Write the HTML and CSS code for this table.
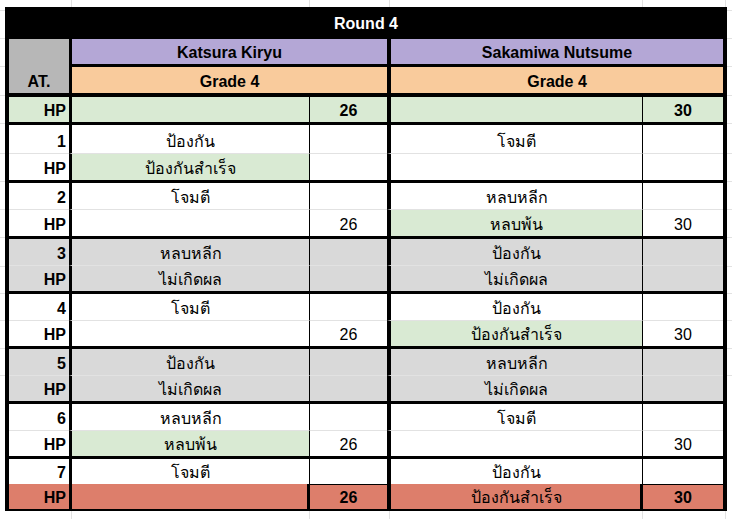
FILE: index.html
```html
<!DOCTYPE html>
<html lang="th">
<head>
<meta charset="utf-8">
<title>Round 4</title>
<link rel="stylesheet" href="styles.css">
</head>
<body>
<div class="sheet">
  <div class="title">Round 4</div>

  <div class="head">
    <div class="at">AT.</div>
    <div class="name p1">Katsura Kiryu</div>
    <div class="name p2">Sakamiwa Nutsume</div>
    <div class="grade p1">Grade 4</div>
    <div class="grade p2">Grade 4</div>
  </div>

  <div class="row start green">
    <div class="c lab">HP</div><div class="c t1"></div><div class="c n1 b">26</div><div class="c t2"></div><div class="c n2 b">30</div>
  </div>

  <div class="group">
    <div class="row tall">
      <div class="c lab">1</div><div class="c t1">ป้องกัน</div><div class="c n1"></div><div class="c t2">โจมตี</div><div class="c n2"></div>
    </div>
    <div class="row sub">
      <div class="c lab">HP</div><div class="c t1 g">ป้องกันสำเร็จ</div><div class="c n1"></div><div class="c t2"></div><div class="c n2"></div>
    </div>
  </div>

  <div class="group g2">
    <div class="row">
      <div class="c lab">2</div><div class="c t1">โจมตี</div><div class="c n1"></div><div class="c t2">หลบหลีก</div><div class="c n2"></div>
    </div>
    <div class="row sub">
      <div class="c lab">HP</div><div class="c t1"></div><div class="c n1">26</div><div class="c t2 g">หลบพ้น</div><div class="c n2">30</div>
    </div>
  </div>

  <div class="group std grey">
    <div class="row">
      <div class="c lab">3</div><div class="c t1">หลบหลีก</div><div class="c n1"></div><div class="c t2">ป้องกัน</div><div class="c n2"></div>
    </div>
    <div class="row sub">
      <div class="c lab">HP</div><div class="c t1">ไม่เกิดผล</div><div class="c n1"></div><div class="c t2">ไม่เกิดผล</div><div class="c n2"></div>
    </div>
  </div>

  <div class="group std">
    <div class="row">
      <div class="c lab">4</div><div class="c t1">โจมตี</div><div class="c n1"></div><div class="c t2">ป้องกัน</div><div class="c n2"></div>
    </div>
    <div class="row sub">
      <div class="c lab">HP</div><div class="c t1"></div><div class="c n1">26</div><div class="c t2 g">ป้องกันสำเร็จ</div><div class="c n2">30</div>
    </div>
  </div>

  <div class="group std grey">
    <div class="row">
      <div class="c lab">5</div><div class="c t1">ป้องกัน</div><div class="c n1"></div><div class="c t2">หลบหลีก</div><div class="c n2"></div>
    </div>
    <div class="row sub">
      <div class="c lab">HP</div><div class="c t1">ไม่เกิดผล</div><div class="c n1"></div><div class="c t2">ไม่เกิดผล</div><div class="c n2"></div>
    </div>
  </div>

  <div class="group std">
    <div class="row">
      <div class="c lab">6</div><div class="c t1">หลบหลีก</div><div class="c n1"></div><div class="c t2">โจมตี</div><div class="c n2"></div>
    </div>
    <div class="row sub">
      <div class="c lab">HP</div><div class="c t1 g">หลบพ้น</div><div class="c n1">26</div><div class="c t2"></div><div class="c n2">30</div>
    </div>
  </div>

  <div class="group last">
    <div class="row">
      <div class="c lab">7</div><div class="c t1">โจมตี</div><div class="c n1"></div><div class="c t2">ป้องกัน</div><div class="c n2"></div>
    </div>
    <div class="row final">
      <div class="c lab">HP</div><div class="c t1"></div><div class="c n1 b">26</div><div class="c t2">ป้องกันสำเร็จ</div><div class="c n2 b">30</div>
    </div>
  </div>
</div>
</body>
</html>
```

FILE: styles.css
```css
html, body {
  margin: 0;
}

body {
  padding: 7px 0 0 5px;
  min-height: 519px;
  box-sizing: border-box;
  font-family: "Liberation Sans", Arial, sans-serif;
  font-size: 16px;
  color: #000;
  background-color: #fff;
  background-repeat: no-repeat;
  background-image:
    linear-gradient(#e2e2e2, #e2e2e2), linear-gradient(#e2e2e2, #e2e2e2),
    linear-gradient(#e2e2e2, #e2e2e2), linear-gradient(#e2e2e2, #e2e2e2),
    linear-gradient(#e2e2e2, #e2e2e2),
    linear-gradient(#e2e2e2, #e2e2e2), linear-gradient(#e2e2e2, #e2e2e2),
    linear-gradient(#e2e2e2, #e2e2e2), linear-gradient(#e2e2e2, #e2e2e2),
    linear-gradient(#e2e2e2, #e2e2e2), linear-gradient(#e2e2e2, #e2e2e2),
    linear-gradient(#e2e2e2, #e2e2e2), linear-gradient(#e2e2e2, #e2e2e2),
    linear-gradient(#e2e2e2, #e2e2e2), linear-gradient(#e2e2e2, #e2e2e2),
    linear-gradient(#e2e2e2, #e2e2e2), linear-gradient(#e2e2e2, #e2e2e2),
    linear-gradient(#e2e2e2, #e2e2e2), linear-gradient(#e2e2e2, #e2e2e2);
  background-size:
    1px 100%, 1px 100%, 1px 100%, 1px 100%, 1px 100%,
    100% 1px, 100% 1px, 100% 1px, 100% 1px, 100% 1px, 100% 1px, 100% 1px,
    100% 1px, 100% 1px, 100% 1px, 100% 1px, 100% 1px, 100% 1px, 100% 1px;
  background-position:
    71px 0, 309px 0, 389px 0, 642px 0, 725px 0,
    0 10px, 0 38px, 0 66px, 0 95px, 0 123px, 0 153px, 0 181px,
    0 209px, 0 237px, 0 266px, 0 293px, 0 320px, 0 348px, 0 375px;
}

.sheet {
  width: 722px;
  box-sizing: border-box;
  background: #000;
  padding: 0 4px 2px;
  display: flex;
  flex-direction: column;
  gap: 3px;
}

.title {
  height: 29px;
  box-sizing: border-box;
  display: flex;
  align-items: flex-end;
  justify-content: center;
  padding-bottom: 3px;
  line-height: 18px;
  color: #fff;
  font-weight: bold;
}

.head {
  display: grid;
  grid-template-columns: 60px 318px 336px;
  grid-template-rows: 25px 26px;
  row-gap: 3px;
  margin-bottom: 1px;
  font-weight: bold;
}

.head > div {
  display: flex;
  align-items: flex-end;
  justify-content: center;
  padding-bottom: 2px;
  line-height: 18px;
  box-sizing: border-box;
}

.at {
  grid-row: 1 / 3;
  background: #b7b7b7;
}

.name { background: #b4a7d6; }
.grade { background: #f9cb9c; }
.head .p1 { border-left: 3px solid #000; }
.head .p2 { border-left: 4px solid #000; }

.group {
  display: flex;
  flex-direction: column;
}

.row {
  display: grid;
  grid-template-columns: 60px 240px 78px 255px 81px;
  height: 26px;
  background: #fff;
}

.row.start { height: 25px; }
.row.tall { height: 28px; }
.row.sub { height: 27px; }
.std .row { height: 26px; }
.std .row.sub { height: 26px; }
.last .row { height: 25px; }

.c {
  display: flex;
  align-items: flex-end;
  justify-content: center;
  padding-bottom: 2px;
  line-height: 18px;
  box-sizing: border-box;
  white-space: nowrap;
}

.lab {
  justify-content: flex-end;
  padding-right: 3px;
  font-weight: bold;
}

.t1 { border-left: 3px solid #000; }
.n1 { border-left: 1px solid #000; }
.t2 { border-left: 4px solid #000; }
.n2 { border-left: 1px solid #000; }

.b { font-weight: bold; }

.sub .c { border-top: 1px solid #e2e2e2; }

.green { background: #d9ead3; }
.grey .row { background: #d9d9d9; }
.c.g { background: #d9ead3; }

.final { background: #dd7e6b; }
.final .n1,
.final .n2 {
  border-top: 1px solid #000;
  border-left: 3px solid #000;
  margin-left: -2px;
}
```
